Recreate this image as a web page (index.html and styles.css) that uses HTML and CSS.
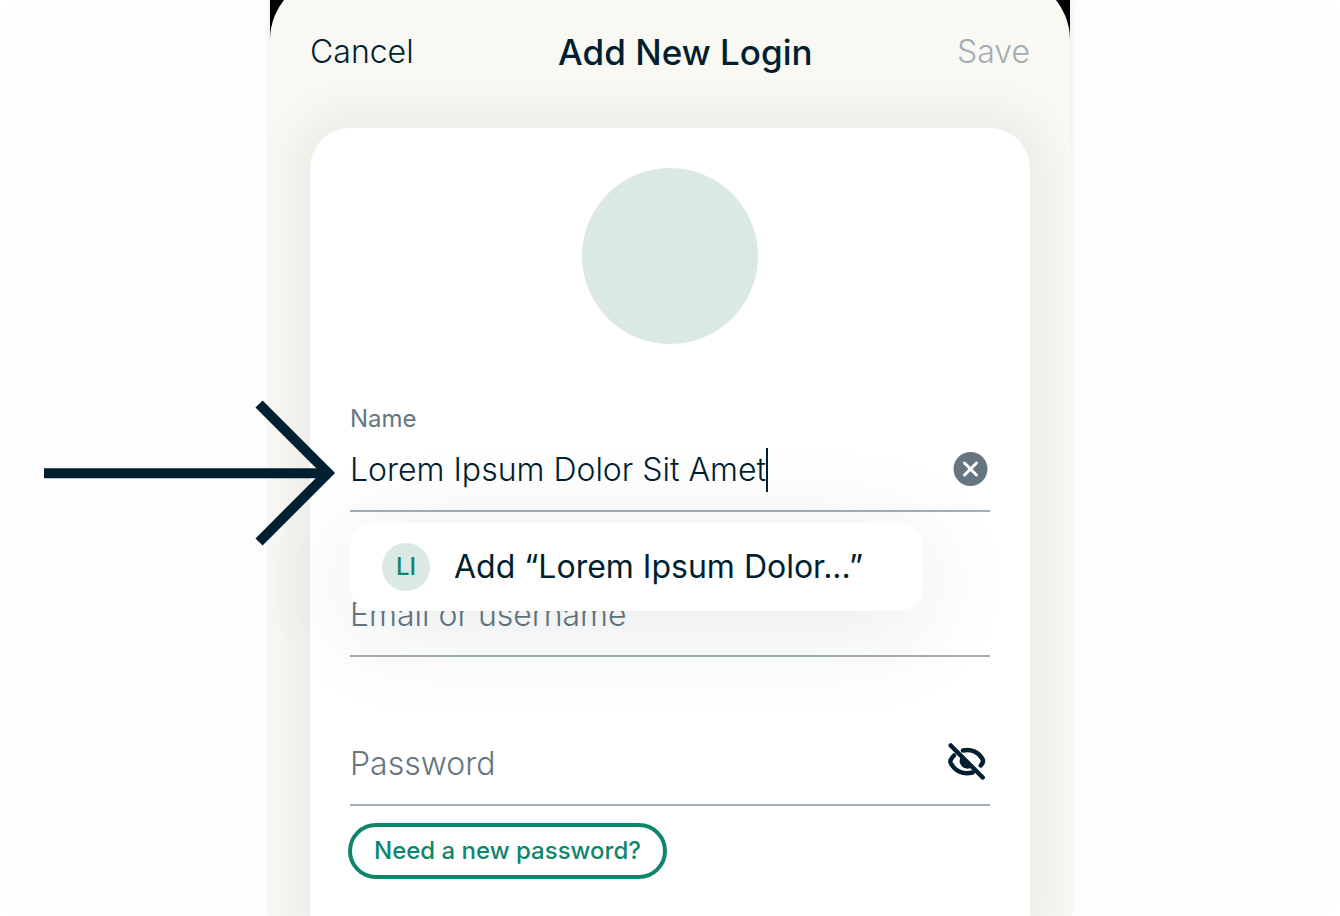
FILE: index.html
```html
<!DOCTYPE html>
<html lang="en">
<head>
<meta charset="utf-8">
<meta name="viewport" content="width=device-width, initial-scale=1">
<title>Add New Login</title>
<link rel="stylesheet" href="styles.css">
</head>
<body>
<main class="stage">
  <div class="phone">
    <form class="sheet">
      <header class="bar">
        <button class="bar-action" type="button">Cancel</button>
        <h1 class="bar-title">Add New Login</h1>
        <button class="bar-action bar-save" type="submit" disabled>Save</button>
      </header>
      <section class="card">
        <div class="avatar"></div>

        <div class="field field-name">
          <label class="field-label" for="name">Name</label>
          <div class="row">
            <span class="typed">
              <input class="input input-fit" id="name" type="text" value="Lorem Ipsum Dolor Sit Amet" size="24">
              <span class="caret"></span>
            </span>
            <button class="icon-button" type="button" aria-label="Clear name">
              <svg class="icon" viewBox="0 0 44 44" aria-hidden="true">
                <circle cx="24.500" cy="21" r="17" fill="#657681"/>
                <path d="M18.500 15l12 12M30.500 15l-12 12" fill="none" stroke="#fff" stroke-width="3" stroke-linecap="round"/>
              </svg>
            </button>
          </div>
          <button class="suggestion" type="button">
            <span class="badge">LI</span>
            <span>Add “Lorem Ipsum Dolor...”</span>
          </button>
        </div>

        <div class="field field-email">
          <div class="row">
            <input class="input" type="text" placeholder="Email or username" aria-label="Email or username">
          </div>
        </div>

        <div class="field field-password">
          <div class="row">
            <input class="input" type="password" placeholder="Password" aria-label="Password">
            <button class="icon-button" type="button" aria-label="Show password">
              <svg class="icon" viewBox="0 0 44 44" aria-hidden="true" fill="none" stroke="#001f30" stroke-width="4.500" stroke-linecap="round" stroke-linejoin="round">
                <path d="M17 8.500C25 6.500 33 10.500 36.500 17Q37.500 19 36.500 21L34.800 23.500"/>
                <path d="M8 13.500Q6 15.500 4.800 17.800Q4 19.500 4.800 21.200C9 29 17 33 26.500 30.500"/>
                <path d="M16 14.500A7 7 0 0 0 25.500 24.500Z" fill="#001f30" stroke-width="2"/>
                <path d="M4.700 3.500L36.700 35.500"/>
              </svg>
            </button>
          </div>
        </div>

        <button class="generate" type="button">Need a new password?</button>
      </section>
    </form>

    <svg class="arrow" viewBox="0 0 292 146" aria-hidden="true" fill="none" stroke="#001f30" stroke-width="10">
      <path d="M0 73.300H286"/>
      <path d="M215 4L284 73L215 142"/>
    </svg>
  </div>
</main>
</body>
</html>
```

FILE: styles.css
```css
* {
  box-sizing: border-box;
}

body {
  margin: 0;
  background: #fff;
  color: #001f30;
  font-family: Inter, "Liberation Sans", sans-serif;
  font-size: 32px;
  line-height: 40px;
}

button,
input {
  margin: 0;
  padding: 0;
  border: 0;
  background: none;
  color: inherit;
  font: inherit;
}

.stage {
  display: flex;
  justify-content: center;
  min-height: 100vh;
  overflow: hidden;
  border-radius: 24px;
  background: #fdfdfd;
}

.phone {
  position: relative;
  display: flex;
  width: 100%;
  max-width: 800px;
  background: #000;
  box-shadow: 0 0 6px #dfe9f0;
}

.sheet {
  display: flex;
  flex: 1;
  flex-direction: column;
  margin-top: -24px;
  overflow: hidden;
  border-radius: 64px 64px 0 0;
  background: #f9f8f2;
}

.bar {
  display: flex;
  align-items: center;
  justify-content: space-between;
  padding: 52px 40px;
  line-height: 48px;
}

.bar-action {
  font-weight: 350;
}

.bar-save {
  color: #a2adb5;
}

.bar-title {
  margin: 0;
  font-size: 35px;
  font-weight: 500;
}

.card {
  display: flex;
  flex: 1;
  flex-direction: column;
  margin: 0 40px;
  padding: 40px 40px 36px;
  border-radius: 40px 40px 0 0;
  background: #fff;
  box-shadow: 0 0 40px 20px rgba(0, 20, 30, 0.05);
}

.avatar {
  align-self: center;
  width: 176px;
  height: 176px;
  border-radius: 50%;
  background: #dae8e6;
}

.field-name {
  position: relative;
  margin-top: 59px;
}

.field-email {
  margin-top: 80px;
}

.field-password {
  margin-top: 84px;
}

.field-label {
  display: block;
  margin-bottom: 12px;
  color: #657681;
  font-size: 24px;
  line-height: 32px;
}

.row {
  display: flex;
  align-items: center;
  justify-content: space-between;
  height: 65px;
  padding-bottom: 18px;
  border-bottom: 2px solid #a2adb5;
}

.typed {
  display: flex;
  align-items: center;
}

.input {
  min-width: 0;
  flex: 1;
  outline: 0;
  font-weight: 350;
}

.input-fit {
  field-sizing: content;
}

.input::placeholder {
  color: #657681;
  opacity: 1;
}

.caret {
  width: 2px;
  height: 44px;
  background: #001f30;
}

.icon-button {
  flex: none;
  width: 44px;
  height: 44px;
}

.icon {
  display: block;
  width: 44px;
  height: 44px;
}

.suggestion {
  position: absolute;
  top: calc(100% + 11px);
  left: 0;
  display: flex;
  align-items: center;
  gap: 24px;
  padding: 20px 60px 20px 32px;
  border-radius: 24px;
  background: #fff;
  box-shadow: 0 16px 100px rgba(0, 40, 50, 0.1);
  line-height: 48px;
  white-space: nowrap;
}

.badge {
  width: 48px;
  border-radius: 50%;
  background: #dae8e6;
  color: #0f866c;
  font-size: 24px;
  font-weight: 500;
  text-align: center;
}

.generate {
  align-self: flex-start;
  margin: 17px 0 0 -2px;
  padding: 8px 22px;
  border: 4px solid #0f866c;
  border-radius: 28px;
  color: #0f866c;
  font-size: 24px;
  font-weight: 500;
  line-height: 32px;
}

.arrow {
  position: absolute;
  top: 400px;
  left: -226px;
  width: 292px;
  height: 146px;
}
```
